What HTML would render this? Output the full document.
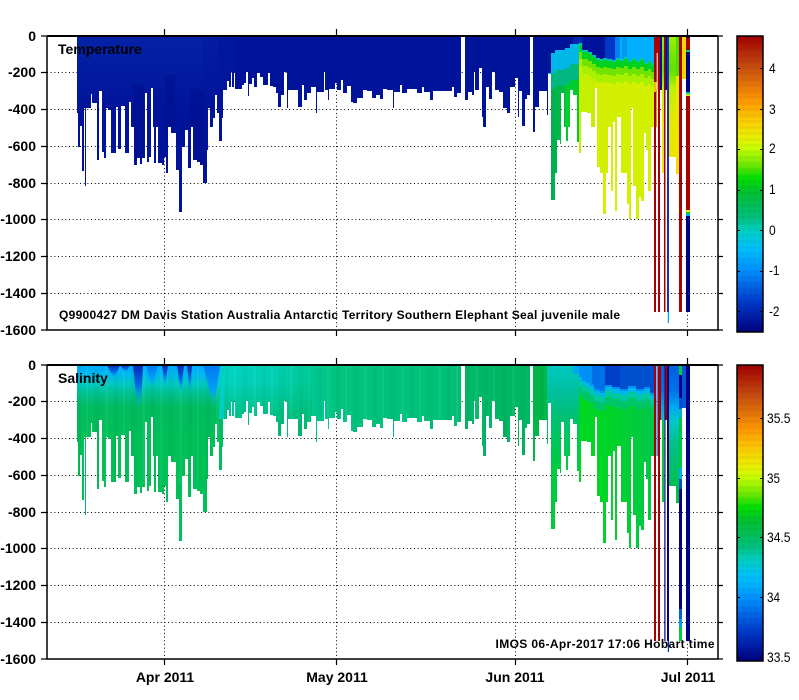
<!DOCTYPE html>
<html>
<head>
<meta charset="utf-8">
<title>Temperature and Salinity</title>
<style>
html,body{margin:0;padding:0;background:#fff;width:799px;height:700px;overflow:hidden}
svg{display:block}
text{font-family:"Liberation Sans",sans-serif;fill:#000}
.b{font-weight:bold;font-size:14px}
.s{font-weight:bold;font-size:12px}
.c{font-size:13.5px}
</style>
</head>
<body>
<svg width="799" height="700" viewBox="0 0 799 700" xmlns="http://www.w3.org/2000/svg">
<defs>
<clipPath id="prof"><path d="M77 36V113H78V147H80V126H82V171H84V108H85V186H86V108H91V94H92V103H97V160H99V91H102V152H104V158H106V108H108V110H111V153H116V107H118V149H121V106H125V153H129V102H131V127H134V165H137V158H140V164H142V158H145V93H147V162H149V157H151V88H153V127H154V163H156V127H158V163H162V165H164V157H166V173H168V127H171V133H176V170H179V212H182V147H185V130H188V168H191V127H193V160H197V162H200V165H203V183H207V150H208V108H210V127H213V118H215V95H217V113H219V141H222V118H223V90H227V81H229V87H231V72H232V87H234V72H235V89H242V85H244V83H246V72H248V96H249V84H252V78H254V87H257V73H260V77H263V85H268V73H270V86H273V87H276V93H278V107H281V95H284V72H287V108H288V90H298V107H302V85H304V100H307V93H311V87H316V113H317V92H324V72H325V90H328V100H329V89H335V83H337V90H341V80H343V93H347V86H351V102H353V103H357V98H363V90H367V91H372V98H376V95H380V99H383V89H387V90H393V108H394V92H400V85H402V93H407V89H417V93H422V87H424V92H430V100H433V91H452V87H454V97H457V93H461V37H465V100H468V92H472V95H474V72H475V90H479V68H482V117H483V127H486V87H489V99H492V72H495V90H499V92H503V108H507V113H510V87H515V78H518V117H519V91H522V126H525V99H527V95H530V37H533V132H535V107H539V91H547V115H548V74H551V200H555V173H557V140H560V144H561V93H564V127H566V141H568V127H570V90H573V95H577V142H579V153H581V112H587V113H591V127H595V88H597V167H600V173H603V214H606V173H608V127H611V191H613V122H615V211H617V117H621V173H627V204H629V219H631V108H633V186H636V219H639V197H641V201H644V133H646V150H648V191H651V127H654V36Z"/></clipPath>
<path id="B" d="M548 20V73H551V53H555V50H565V48H570V44H579V43H582V50H588V52H592V55H596V58H600V59H603V58H607V59H612V60H616V58H620V59H624V57H628V60H632V58H636V60H640V58H644V62H648V60H651V63H654V20Z"/>
<clipPath id="above"><use href="#B"/></clipPath>
<clipPath id="leftT"><rect x="548" y="36" width="31" height="200"/></clipPath>
<path id="B2" d="M579 20V46H582V50H586V52H590V55H594V60H600V62H605V56H612V58H620V60H628V57H636V60H644V58H650V64H654V20Z"/>
<clipPath id="above2"><use href="#B2"/></clipPath>
<linearGradient id="cm" x1="0" y1="0" x2="0" y2="1">
<stop offset="0" stop-color="#a00000"/><stop offset=".108" stop-color="#c85010"/><stop offset=".22" stop-color="#ff9a00"/><stop offset=".29" stop-color="#fcd000"/><stop offset=".345" stop-color="#e8f000"/><stop offset=".378" stop-color="#c8ff00"/><stop offset=".436" stop-color="#70e800"/><stop offset=".48" stop-color="#00e000"/><stop offset=".527" stop-color="#00c030"/><stop offset=".615" stop-color="#00c080"/><stop offset=".655" stop-color="#00d0c0"/><stop offset=".72" stop-color="#00c0ff"/><stop offset=".79" stop-color="#0090ff"/><stop offset=".89" stop-color="#0040d0"/><stop offset="1" stop-color="#000080"/>
</linearGradient>
<pattern id="bands" width="6" height="6" patternUnits="userSpaceOnUse"><rect width="6" height="3" fill="#000" opacity=".035"/></pattern>
<pattern id="stripes" width="37" height="10" patternUnits="userSpaceOnUse"><rect x="3" width="4" height="10" fill="#000" opacity=".035"/><rect x="12" width="2" height="10" fill="#fff" opacity=".05"/><rect x="20" width="6" height="10" fill="#000" opacity=".03"/><rect x="31" width="3" height="10" fill="#fff" opacity=".05"/></pattern>
<linearGradient id="sal1" gradientUnits="userSpaceOnUse" x1="0" y1="36" x2="0" y2="110">
<stop offset="0" stop-color="#00a8ff"/><stop offset=".12" stop-color="#00b8f0"/><stop offset=".26" stop-color="#00c8c0"/><stop offset=".43" stop-color="#00c080"/><stop offset=".58" stop-color="#00bc60"/><stop offset="1" stop-color="#00c058"/>
</linearGradient>
<linearGradient id="sal2" gradientUnits="userSpaceOnUse" x1="222" y1="0" x2="533" y2="0">
<stop offset="0" stop-color="#00d4c4"/><stop offset=".18" stop-color="#00cfb0"/><stop offset=".37" stop-color="#00c480"/><stop offset=".76" stop-color="#00c078"/><stop offset=".77" stop-color="#00b868"/><stop offset="1" stop-color="#00b860"/>
</linearGradient>
<linearGradient id="sal2v" gradientUnits="userSpaceOnUse" x1="0" y1="50" x2="0" y2="100">
<stop offset="0" stop-color="#00b868" stop-opacity="0"/><stop offset="1" stop-color="#00b868" stop-opacity=".85"/>
</linearGradient>
<linearGradient id="salL" gradientUnits="userSpaceOnUse" x1="0" y1="36" x2="0" y2="140">
<stop offset="0" stop-color="#00c8c0"/><stop offset=".25" stop-color="#00c0a0"/><stop offset=".52" stop-color="#00c070"/><stop offset="1" stop-color="#00cc40"/>
</linearGradient>
<linearGradient id="salD" gradientUnits="userSpaceOnUse" x1="579" y1="0" x2="654" y2="0">
<stop offset="0" stop-color="#00d820"/><stop offset=".4" stop-color="#00d428"/><stop offset="1" stop-color="#00c848"/>
</linearGradient>
<linearGradient id="sp" x1="0" y1="0" x2="0" y2="1">
<stop offset="0" stop-color="#0028b0"/><stop offset=".5" stop-color="#0070e8"/><stop offset="1" stop-color="#00c0d0" stop-opacity=".1"/>
</linearGradient>
<linearGradient id="spL" x1="0" y1="0" x2="0" y2="1">
<stop offset="0" stop-color="#0078f0"/><stop offset=".6" stop-color="#00a0f8"/><stop offset="1" stop-color="#00c0d0" stop-opacity=".1"/>
</linearGradient>
<linearGradient id="tempOv" gradientUnits="userSpaceOnUse" x1="0" y1="36" x2="0" y2="110">
<stop offset="0" stop-color="#0a38b8" stop-opacity=".4"/><stop offset="1" stop-color="#0a38b8" stop-opacity="0"/>
</linearGradient>
<linearGradient id="tailT" gradientUnits="userSpaceOnUse" x1="0" y1="36" x2="0" y2="180">
<stop offset="0" stop-color="#a0f000"/><stop offset=".14" stop-color="#70e800"/><stop offset=".24" stop-color="#60e000"/><stop offset=".36" stop-color="#c0f000"/><stop offset=".6" stop-color="#e8e800"/><stop offset="1" stop-color="#f0e000"/>
</linearGradient>
<linearGradient id="tailS" gradientUnits="userSpaceOnUse" x1="0" y1="36" x2="0" y2="160">
<stop offset="0" stop-color="#0060e0"/><stop offset=".2" stop-color="#0070e8"/><stop offset=".34" stop-color="#00a8f0"/><stop offset=".46" stop-color="#00c8c8"/><stop offset=".62" stop-color="#00c090"/><stop offset="1" stop-color="#00c048"/>
</linearGradient>
</defs>

<rect width="799" height="700" fill="#fff"/>

<!-- grid -->
<g stroke="#000" stroke-width="1" stroke-dasharray="1 2.67" fill="none">
<path d="M47 72.5H718M47 109.5H718M47 146.5H718M47 183.5H718M47 219.5H718M47 256.5H718M47 293.5H718"/>
<path d="M47 401.5H718M47 438.5H718M47 475.5H718M47 512.5H718M47 548.5H718M47 585.5H718M47 622.5H718"/>
<path d="M164.5 36V330M336.5 36V330M515.5 36V330M687.5 36V330"/>
<path d="M164.5 365V659M336.5 365V659M515.5 365V659M687.5 365V659"/>
</g>

<!-- temperature data -->
<g clip-path="url(#prof)">
<rect x="77" y="36" width="471" height="190" fill="#00149b"/>
<rect x="77" y="36" width="125" height="80" fill="url(#tempOv)"/>
<rect x="202" y="36" width="16" height="80" fill="url(#tempOv)" opacity=".65"/>
<rect x="218" y="36" width="17" height="80" fill="url(#tempOv)" opacity=".3"/>
<rect x="134" y="85" width="10" height="85" fill="#000e8c" opacity=".6"/>
<rect x="165" y="75" width="10" height="70" fill="#000e8c" opacity=".5"/>
<rect x="190" y="90" width="14" height="75" fill="#000e8c" opacity=".5"/>
<rect x="548" y="36" width="106" height="190" fill="#d2f000"/>
<rect x="579" y="36" width="16" height="190" fill="#c4f000"/>
<use href="#B" y="24" fill="#a8f000"/>
<use href="#B" y="16" fill="#70e400"/>
<use href="#B" y="9" fill="#00d020"/>
<use href="#B" y="2" fill="#00c8b0"/>
<g clip-path="url(#leftT)">
<rect x="548" y="36" width="31" height="190" fill="#00cc30"/>
<rect x="551" y="36" width="6" height="190" fill="#00b050"/>
<rect x="557" y="36" width="8" height="190" fill="#00b848"/>
<use href="#B" y="36" fill="#00b880"/>
<use href="#B" y="20" fill="#00b8e8"/>
</g>
<g clip-path="url(#above)">
<rect x="548" y="36" width="58" height="40" fill="#00149b"/>
<rect x="573" y="36" width="10" height="40" fill="#0028b0"/>
<rect x="605" y="36" width="10" height="40" fill="#0038c8"/>
<rect x="615" y="36" width="5" height="40" fill="#0080f0"/>
<rect x="620" y="36" width="34" height="40" fill="#00b0ff"/>
<rect x="622" y="36" width="5" height="40" fill="#0098f4"/>
</g>
</g>
<!-- temperature tail -->
<rect x="654" y="36" width="2" height="276" fill="#a80000"/>
<rect x="654" y="36" width="6" height="54" fill="#a80000"/>
<rect x="654" y="82" width="3" height="10" fill="#f0c000"/>
<rect x="656.7" y="53" width="1" height="37" fill="#fff"/>
<rect x="656" y="90" width="1" height="37" fill="#e0a000"/>
<rect x="658" y="36" width="2" height="276" fill="#a80000"/>
<rect x="660" y="36" width="2" height="54" fill="#00149b"/>
<rect x="662" y="36" width="2" height="137" fill="url(#tailT)"/>
<rect x="664" y="36" width="1.5" height="276" fill="#a80000"/>
<rect x="665.5" y="36" width="2" height="54" fill="#00149b"/>
<rect x="667" y="36" width="2" height="276" fill="#1030c0"/>
<rect x="667.8" y="312" width="1.2" height="11" fill="#00a0ff"/>
<rect x="669" y="36" width="7" height="121" fill="url(#tailT)"/>
<rect x="676" y="36" width="3" height="40" fill="#50dc00"/>
<rect x="676" y="76" width="3" height="81" fill="#e8e800"/>
<rect x="676" y="157" width="3" height="17" fill="#f0e000"/>
<rect x="679" y="36" width="3" height="276" fill="#a80000"/>
<rect x="682" y="36" width="4" height="43" fill="#f0d800"/>
<rect x="686" y="36" width="4" height="276" fill="#000080"/>
<rect x="686" y="38" width="4" height="12" fill="#a80000"/>
<rect x="686" y="50" width="4" height="2" fill="#00d060"/>
<rect x="686" y="92" width="4" height="2" fill="#00c0e0"/>
<rect x="686" y="94" width="4" height="2" fill="#c0f000"/>
<rect x="686" y="96" width="4" height="114" fill="#a80000"/>
<rect x="686" y="210" width="4" height="2" fill="#e8f000"/>
<rect x="686" y="212" width="4" height="2" fill="#00d040"/>
<rect x="686" y="214" width="4" height="2" fill="#00a0ff"/>

<!-- salinity data -->
<g transform="translate(0,329)">
<g clip-path="url(#prof)">
<rect x="77" y="36" width="145" height="190" fill="url(#sal1)"/>
<rect x="222" y="36" width="326" height="120" fill="url(#sal2)"/>
<rect x="222" y="36" width="90" height="120" fill="url(#sal2v)"/>
<rect x="533" y="36" width="15" height="120" fill="#00b848"/>
<rect x="77" y="36" width="471" height="120" fill="url(#stripes)"/>
<path fill="url(#sp)" d="M133 36H143L141 78H137Z"/>
<path fill="url(#sp)" d="M107 36H120L114 50Z"/>
<path fill="url(#sp)" d="M120 36H130L126 44Z"/>
<path fill="url(#sp)" d="M162 36H168L165 58Z"/>
<path fill="url(#sp)" d="M177 36H184L181 66Z"/>
<path fill="url(#sp)" d="M187 36H192L190 64Z"/>
<path fill="url(#spL)" d="M203 36H220L214 78Z"/>
<path fill="url(#spL)" d="M146 36H158L152 60Z"/>
<path fill="#00d0c8" opacity=".9" d="M220 36H224V90H219Z"/>
<rect x="547" y="36" width="32" height="190" fill="url(#salL)"/>
<rect x="573" y="36" width="6" height="9" fill="#00a8f0"/>
<rect x="579" y="36" width="75" height="190" fill="url(#salD)"/>
<use href="#B2" y="20" fill="#00c468"/>
<use href="#B2" y="12" fill="#00c8a0"/>
<use href="#B2" y="6" fill="#00b8e8"/>
<use href="#B2" y="2" fill="#0090f8"/>
<g clip-path="url(#above2)">
<rect x="579" y="36" width="13" height="40" fill="#0090f8"/>
<rect x="592" y="36" width="13" height="40" fill="#0070e8"/>
<rect x="605" y="36" width="15" height="40" fill="#0040c8"/>
<rect x="620" y="36" width="34" height="40" fill="#0050d0"/>
</g>
</g>
<rect x="654" y="36" width="2" height="276" fill="#a80000"/>
<rect x="656.5" y="36" width="1.2" height="91" fill="#1060d0"/>
<rect x="658" y="36" width="2" height="276" fill="#a80000"/>
<rect x="660" y="36" width="1" height="55" fill="#a80000"/>
<rect x="661" y="36" width="3.3" height="55" fill="url(#tailS)"/>
<rect x="662" y="91" width="2" height="82" fill="#00c840"/>
<rect x="664.3" y="36" width="1.2" height="276" fill="#000080"/>
<rect x="665.3" y="36" width="2" height="55" fill="#a80000"/>
<rect x="667" y="36" width="2" height="276" fill="#000080"/>
<rect x="667.8" y="312" width="1.2" height="11" fill="#0030c0"/>
<rect x="669" y="36" width="10" height="121" fill="url(#tailS)"/>
<rect x="676" y="157" width="3" height="17" fill="#00c040"/>
<rect x="679" y="36" width="3" height="276" fill="#000080"/>
<rect x="679" y="36" width="3" height="10" fill="#00c840"/>
<rect x="679" y="69" width="3" height="11" fill="#0050d0"/>
<rect x="679" y="80" width="3" height="9" fill="#00b8c0"/>
<rect x="679" y="89" width="3" height="50" fill="#00c840"/>
<rect x="679" y="139" width="3" height="11" fill="#00b0f0"/>
<rect x="679" y="150" width="3" height="10" fill="#0050d0"/>
<rect x="679" y="280" width="3" height="10" fill="#0060e0"/>
<rect x="679" y="290" width="3" height="8" fill="#00a0f0"/>
<rect x="679" y="298" width="3" height="14" fill="#00d040"/>
<rect x="682" y="36" width="4" height="43" fill="#0058d8"/>
<rect x="686" y="36" width="4" height="276" fill="#000080"/>
</g>

<!-- axes -->
<g stroke="#000" fill="none" stroke-width="1.5">
<path d="M47 36V330H718V36"/>
<path d="M47 365V659H718V365"/>
<path d="M47 36H718M47 365H718" stroke-width="2"/>
</g>
<g stroke="#000" stroke-width="1.2" fill="none">
<path d="M41 36H47M41 72.5H47M41 109.5H47M41 146.5H47M41 183.5H47M41 219.5H47M41 256.5H47M41 293.5H47M41 330H47"/>
<path d="M718 36H723M718 72.5H723M718 109.5H723M718 146.5H723M718 183.5H723M718 219.5H723M718 256.5H723M718 293.5H723M718 330H723"/>
<path d="M41 365H47M41 401.5H47M41 438.5H47M41 475.5H47M41 512.5H47M41 548.5H47M41 585.5H47M41 622.5H47M41 659H47"/>
<path d="M718 365H723M718 401.5H723M718 438.5H723M718 475.5H723M718 512.5H723M718 548.5H723M718 585.5H723M718 622.5H723M718 659H723"/>
<path d="M164.5 29V36M336.5 29V36M515.5 29V36M687.5 29V36M164.5 330V336M336.5 330V336M515.5 330V336M687.5 330V336"/>
<path d="M164.5 358V365M336.5 358V365M515.5 358V365M687.5 358V365M164.5 659V665M336.5 659V665M515.5 659V665M687.5 659V665"/>
</g>

<!-- y labels -->
<g text-anchor="end">
<text x="36" y="41" class="b">0</text>
<text x="36" y="77" class="b">-200</text>
<text x="36" y="114" class="b">-400</text>
<text x="36" y="151" class="b">-600</text>
<text x="36" y="188" class="b">-800</text>
<text x="36" y="224" class="b">-1000</text>
<text x="36" y="261" class="b">-1200</text>
<text x="36" y="298" class="b">-1400</text>
<text x="36" y="335" class="b">-1600</text>
<text x="36" y="370" class="b">0</text>
<text x="36" y="406" class="b">-200</text>
<text x="36" y="443" class="b">-400</text>
<text x="36" y="480" class="b">-600</text>
<text x="36" y="517" class="b">-800</text>
<text x="36" y="553" class="b">-1000</text>
<text x="36" y="590" class="b">-1200</text>
<text x="36" y="627" class="b">-1400</text>
<text x="36" y="664" class="b">-1600</text>
</g>

<!-- x labels -->
<g text-anchor="middle">
<text x="165" y="682" class="b">Apr 2011</text>
<text x="337" y="682" class="b">May 2011</text>
<text x="515" y="682" class="b">Jun 2011</text>
<text x="688" y="682" class="b">Jul 2011</text>
</g>

<!-- overlay text -->
<text x="58" y="54" class="b">Temperature</text>
<text x="58" y="383" class="b">Salinity</text>
<text x="59" y="319" class="s" textLength="561" lengthAdjust="spacing">Q9900427 DM Davis Station Australia Antarctic Territory Southern Elephant Seal juvenile male</text>
<text x="495.5" y="648" class="s" textLength="219" lengthAdjust="spacing">IMOS 06-Apr-2017 17:06 Hobart time</text>

<!-- colorbars -->
<rect x="737" y="36" width="26" height="296" fill="url(#cm)"/>
<rect x="737" y="36" width="26" height="296" fill="url(#bands)"/>
<rect x="737" y="36" width="26" height="296" fill="none" stroke="#000" stroke-width="1.5"/>
<path stroke="#000" fill="none" d="M737 68.5H740M760 68.5H763M737 109.5H740M760 109.5H763M737 149.5H740M760 149.5H763M737 190.5H740M760 190.5H763M737 230.5H740M760 230.5H763M737 271.5H740M760 271.5H763M737 311.5H740M760 311.5H763"/>
<text x="769" y="73" class="c" textLength="6.7" lengthAdjust="spacingAndGlyphs">4</text>
<text x="769" y="114" class="c" textLength="6.7" lengthAdjust="spacingAndGlyphs">3</text>
<text x="769" y="153" class="c" textLength="6.7" lengthAdjust="spacingAndGlyphs">2</text>
<text x="769" y="194" class="c" textLength="6.7" lengthAdjust="spacingAndGlyphs">1</text>
<text x="769" y="235" class="c" textLength="6.7" lengthAdjust="spacingAndGlyphs">0</text>
<text x="769" y="275" class="c" textLength="10.5" lengthAdjust="spacingAndGlyphs">-1</text>
<text x="769" y="316" class="c" textLength="10.5" lengthAdjust="spacingAndGlyphs">-2</text>

<rect x="737" y="365" width="26" height="296" fill="url(#cm)"/>
<rect x="737" y="365" width="26" height="296" fill="url(#bands)"/>
<rect x="737" y="365" width="26" height="296" fill="none" stroke="#000" stroke-width="1.5"/>
<path stroke="#000" fill="none" d="M737 418.5H740M760 418.5H763M737 478.5H740M760 478.5H763M737 537.5H740M760 537.5H763M737 597.5H740M760 597.5H763M737 657.5H740M760 657.5H763"/>
<text x="767" y="423" class="c" textLength="23.5" lengthAdjust="spacingAndGlyphs">35.5</text>
<text x="767" y="483" class="c" textLength="13" lengthAdjust="spacingAndGlyphs">35</text>
<text x="767" y="542" class="c" textLength="23.5" lengthAdjust="spacingAndGlyphs">34.5</text>
<text x="767" y="602" class="c" textLength="13" lengthAdjust="spacingAndGlyphs">34</text>
<text x="767" y="662" class="c" textLength="23.5" lengthAdjust="spacingAndGlyphs">33.5</text>
</svg>
</body>
</html>
